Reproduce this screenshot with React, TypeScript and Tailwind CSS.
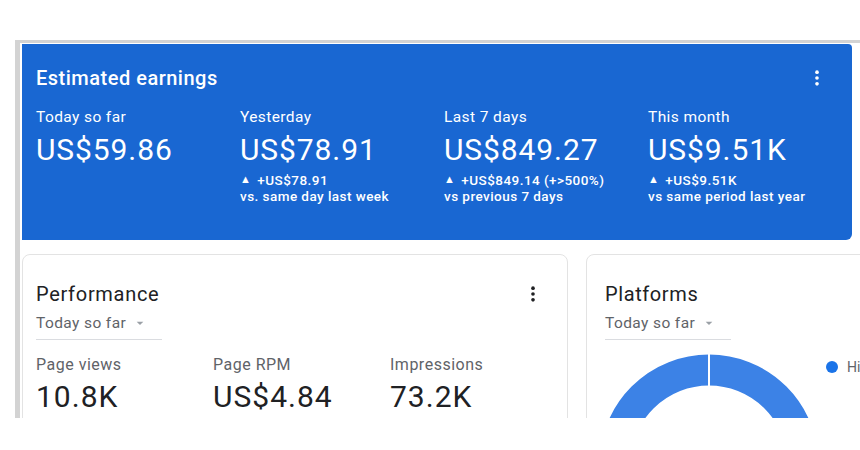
import * as React from 'react'

const FONT = { fontFamily: 'Roboto, "Noto Sans", Arial, sans-serif' }

interface EarningStat {
    label: string
    value: string
    delta?: string
    note?: string
}

const EARNINGS: EarningStat[] = [
    { label: 'Today so far', value: 'US$59.86' },
    { label: 'Yesterday', value: 'US$78.91', delta: '+US$78.91', note: 'vs. same day last week' },
    { label: 'Last 7 days', value: 'US$849.27', delta: '+US$849.14 (+>500%)', note: 'vs previous 7 days' },
    { label: 'This month', value: 'US$9.51K', delta: '+US$9.51K', note: 'vs same period last year' },
]

const PERFORMANCE = [
    { label: 'Page views', value: '10.8K' },
    { label: 'Page RPM', value: 'US$4.84' },
    { label: 'Impressions', value: '73.2K' },
]

function MoreVert({ className }: { className?: string }) {
    return (
        <svg viewBox="0 0 24 24" className={className} fill="currentColor">
            <circle cx="12" cy="5" r="2.2" />
            <circle cx="12" cy="12" r="2.2" />
            <circle cx="12" cy="19" r="2.2" />
        </svg>
    )
}

function RangeSelect({ width }: { width: string }) {
    return (
        <div className={`mt-[7px] flex items-center border-b border-[#dadce0] pb-[6px] ${width}`}>
            <span className="text-[15.5px] leading-5 tracking-[0.4px] text-[#5f6368]">Today so far</span>
            <svg viewBox="0 0 24 24" className="ml-[6px] h-4 w-4 text-[#9aa0a6]" fill="currentColor">
                <path d="M7 10l5 5 5-5z" />
            </svg>
        </div>
    )
}

export default function App() {
    return (
        <div className="h-[450px] w-[860px] overflow-hidden bg-white" style={FONT}>
            <div className="ml-[15px] mt-[40px] h-[378px] overflow-hidden border-l-[5px] border-t-[3px] border-[#d3d3d3] pl-[2px] pt-[1px]">
                {/* Estimated earnings */}
                <div className="h-[196px] w-[830px] rounded-br-md rounded-tr-sm bg-[#1967d2] pl-[14px] text-white">
                    <div className="flex items-center justify-between pr-[25px] pt-[22px]">
                        <h2 className="text-[20px] font-medium leading-6 tracking-[0.5px]">Estimated earnings</h2>
                        <MoreVert className="h-[20px] w-[20px]" />
                    </div>
                    <div className="mt-[17px] flex">
                        {EARNINGS.map((e) => (
                            <div key={e.label} className="w-[204px]">
                                <div className="text-[15.5px] leading-5 tracking-[0.4px]">{e.label}</div>
                                <div className="mt-[6px] text-[30px] leading-[34px] tracking-[0.9px]">{e.value}</div>
                                {e.delta && (
                                    <div className="mt-[5px] text-[13.5px] font-medium leading-4 tracking-[0.45px]">
                                        <div className="flex items-center">
                                            <span className="mr-[6px] text-[11px] leading-4">▲</span>
                                            {e.delta}
                                        </div>
                                        <div>{e.note}</div>
                                    </div>
                                )}
                            </div>
                        ))}
                    </div>
                </div>

                <div className="mt-[14px] flex gap-[18px]">
                    {/* Performance */}
                    <div className="h-[200px] w-[546px] shrink-0 rounded-lg border border-[#e3e3e3] pl-[13px] pt-[27px]">
                        <div className="flex items-center justify-between pr-[24px]">
                            <h3 className="text-[20px] leading-6 tracking-[0.7px] text-[#202124]">Performance</h3>
                            <MoreVert className="h-[20px] w-[20px] text-[#202124]" />
                        </div>
                        <RangeSelect width="w-[126px]" />
                        <div className="mt-[15px] flex">
                            {PERFORMANCE.map((p) => (
                                <div key={p.label} className="w-[177px]">
                                    <div className="text-[16px] leading-5 tracking-[0.5px] text-[#5f6368]">{p.label}</div>
                                    <div className="mt-[6px] text-[30px] leading-8 tracking-[1px] text-[#202124]">{p.value}</div>
                                </div>
                            ))}
                        </div>
                    </div>

                    {/* Platforms */}
                    <div className="h-[200px] w-[300px] shrink-0 overflow-hidden rounded-lg border border-[#e3e3e3] pl-[18px] pt-[27px]">
                        <h3 className="text-[20px] leading-6 tracking-[0.6px] text-[#202124]">Platforms</h3>
                        <RangeSelect width="w-[126px]" />
                        <div className="mt-[14px] flex items-start">
                            <svg viewBox="0 0 220 220" className="-ml-[6px] h-[220px] w-[220px] shrink-0">
                                <circle cx="110" cy="110" r="94" fill="none" stroke="#3c82e6" strokeWidth="31" />
                                <line x1="110" y1="0" x2="110" y2="32" stroke="#ffffff" strokeWidth="2" />
                            </svg>
                            <div className="ml-[7px] mt-[6px] flex items-center gap-[9px] whitespace-nowrap">
                                <span className="h-[12px] w-[12px] rounded-full bg-[#1a73e8]" />
                                <span className="text-[14px] leading-[14px] text-[#5f6368]">High-end mobile devices</span>
                            </div>
                        </div>
                    </div>
                </div>
            </div>
        </div>
    )
}
